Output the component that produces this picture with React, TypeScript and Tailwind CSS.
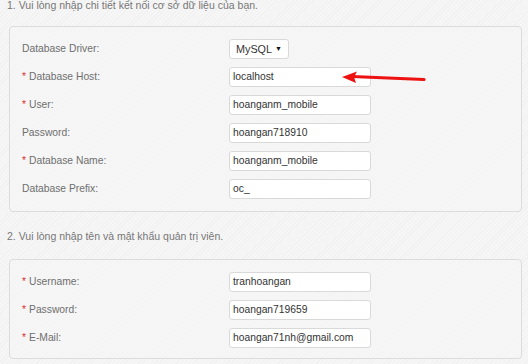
import { ReactNode } from "react";

const font = { fontFamily: '"Liberation Sans", Arial, sans-serif' };

type Field = { label: string; value: string; required?: boolean; select?: boolean };

const dbFields: Field[] = [
  { label: "Database Driver:", value: "MySQL", select: true },
  { label: "Database Host:", value: "localhost", required: true },
  { label: "User:", value: "hoanganm_mobile", required: true },
  { label: "Password:", value: "hoangan718910" },
  { label: "Database Name:", value: "hoanganm_mobile", required: true },
  { label: "Database Prefix:", value: "oc_" },
];

const adminFields: Field[] = [
  { label: "Username:", value: "tranhoangan", required: true },
  { label: "Password:", value: "hoangan719659", required: true },
  { label: "E-Mail:", value: "hoangan71nh@gmail.com", required: true },
];

const Row = ({ f }: { f: Field }) => (
  <div className="flex items-center h-[20px]">
    <label className="w-[219px] pl-[12px] text-[10.3px] text-[#6f6f6f]">
      {f.required && <span className="text-[#e03030] mr-[3px]">*</span>}
      {f.label}
    </label>
    {f.select ? (
      <div className="w-[60px] h-[20px] flex items-center justify-between pl-[6px] pr-[6px] bg-white border border-[#d9d9d9] rounded-[3px] text-[10.8px] text-[#333]">
        <span>MySQL</span>
        <span className="text-[7px] text-[#111]">▼</span>
      </div>
    ) : (
      <div className="w-[142px] h-[20px] flex items-center pl-[3px] bg-white border border-[#d9d9d9] rounded-[3px] text-[10.3px] text-[#333]">
        {f.value}
      </div>
    )}
  </div>
);

const Panel = ({ children, className }: { children: ReactNode; className: string }) => (
  <div
    className={`ml-[9px] w-[513px] border border-[#dcdcdc] rounded-[4px] bg-[#f6f6f6]/60 flex flex-col gap-[8px] ${className}`}
  >
    {children}
  </div>
);

export default function App() {
  return (
    <div
      className="relative w-[528px] h-[364px] overflow-hidden bg-[#f3f3f3] bg-[repeating-linear-gradient(135deg,#f1f1f1_0px,#f1f1f1_1px,#f6f6f6_1px,#f6f6f6_3px)]"
      style={font}
    >
      <p className="mt-[-3px] h-[16px] leading-[16px] pl-[7px] text-[10.5px] text-[#777]">
        1. Vui lòng nhập chi tiết kết nối cơ sở dữ liệu của bạn.
      </p>
      <div className="h-[13px]" />
      <Panel className="pt-[12px] pb-[12px]">
        {dbFields.map((f) => (
          <Row key={f.label} f={f} />
        ))}
      </Panel>
      <p className="mt-[16px] h-[16px] leading-[16px] pl-[7px] text-[10.5px] text-[#777]">
        2. Vui lòng nhập tên và mật khẩu quản trị viên.
      </p>
      <div className="h-[15px]" />
      <Panel className="pt-[12px] pb-[10px]">
        {adminFields.map((f) => (
          <Row key={f.label} f={f} />
        ))}
      </Panel>

      <svg
        className="absolute left-0 top-0 pointer-events-none"
        width="528"
        height="364"
        viewBox="0 0 528 364"
      >
        <line x1="424" y1="79.5" x2="352" y2="76.5" stroke="#ee1111" strokeWidth="3.2" strokeLinecap="round" />
        <polygon points="342,77 357,71.5 354,77 356,83" fill="#ee1111" />
      </svg>
    </div>
  );
}
